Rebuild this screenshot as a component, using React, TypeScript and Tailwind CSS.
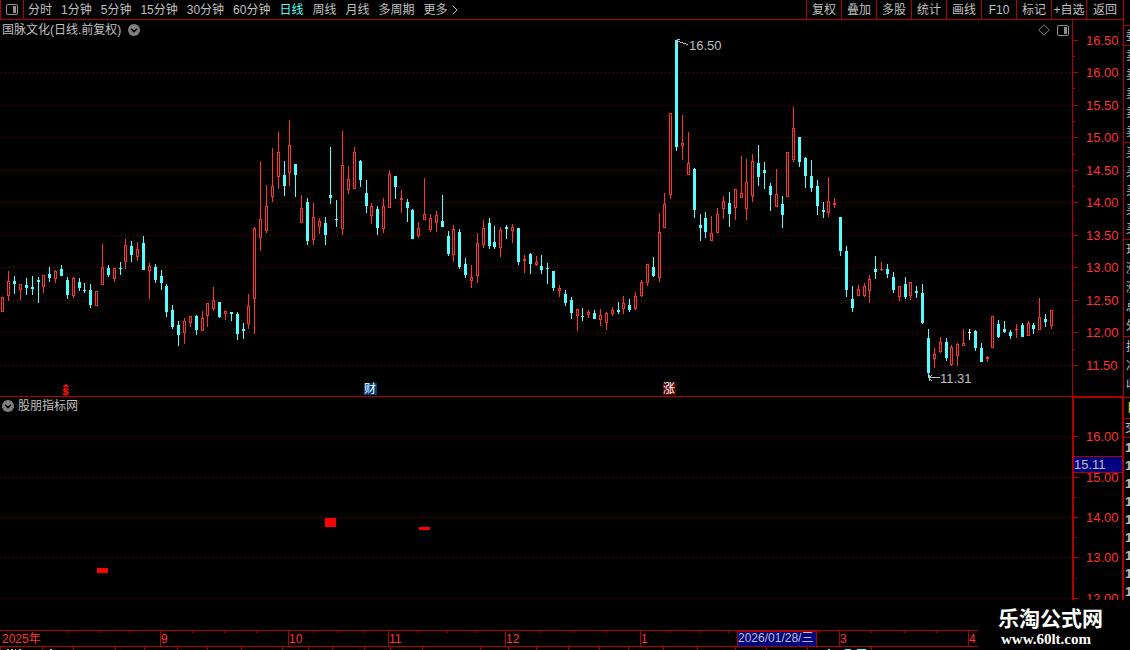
import React, { useState } from "react";

/**
 * Stock K-line terminal view
 * - period tabs and tool buttons on top
 * - candlestick chart with price scale
 * - indicator panel and time scale below
 */

type Kind = "r" | "c" | "w";
type Candle = [Kind, number, number, number, number];

const PERIODS = ["分时", "1分钟", "5分钟", "15分钟", "30分钟", "60分钟", "日线", "周线", "月线", "多周期"];
const TOOLS = ["复权", "叠加", "多股", "统计", "画线", "F10", "标记", "+自选"];

const COLORS = { r: "#ff3232", c: "#54ffff", w: "#ffffff" };
const AXIS = "#b00000";
const GRID = "#980000";

const FIRST_X = 2.87;
const STEP_X = 5.8586;

// colour, high, body top, body bottom, low
const CANDLES: Candle[] = [
  ["r", 297, 297, 312, 312], ["r", 271, 281, 296, 301], ["c", 276, 281, 284, 294], ["r", 284, 284, 290, 300],
  ["c", 278, 285, 288, 295], ["c", 276, 287, 289, 295], ["c", 277, 280, 282, 303], ["r", 275, 275, 287, 293],
  ["c", 267, 274, 278, 282], ["r", 270, 271, 279, 283], ["c", 265, 269, 276, 276], ["c", 277, 280, 295, 299],
  ["r", 277, 278, 296, 298], ["c", 278, 282, 288, 291], ["c", 283, 290, 291, 293], ["c", 284, 290, 305, 308],
  ["r", 291, 291, 306, 306], ["r", 244, 267, 285, 285], ["c", 265, 268, 275, 277], ["r", 268, 268, 279, 282],
  ["c", 262, 268, 269, 275], ["r", 239, 245, 262, 269], ["c", 241, 246, 255, 262], ["r", 242, 249, 257, 261],
  ["c", 236, 243, 270, 270], ["r", 263, 266, 271, 299], ["c", 264, 267, 280, 283], ["c", 270, 276, 283, 290],
  ["c", 284, 286, 312, 317], ["c", 305, 310, 327, 329], ["c", 321, 325, 335, 346], ["r", 318, 321, 333, 344],
  ["r", 316, 316, 323, 327], ["c", 315, 316, 330, 335], ["r", 311, 318, 331, 331], ["r", 303, 303, 316, 327],
  ["r", 287, 300, 309, 311], ["c", 302, 302, 317, 318], ["r", 310, 311, 314, 320], ["c", 312, 312, 314, 321],
  ["c", 312, 314, 334, 340], ["c", 323, 329, 331, 339], ["r", 294, 306, 324, 329], ["r", 227, 228, 299, 334],
  ["r", 161, 219, 238, 251], ["r", 185, 206, 231, 233], ["r", 148, 186, 197, 202], ["r", 132, 152, 177, 189],
  ["c", 161, 175, 186, 196], ["r", 120, 145, 173, 186], ["c", 164, 164, 175, 197], ["r", 195, 208, 223, 223],
  ["c", 198, 202, 241, 245], ["r", 203, 217, 240, 245], ["r", 218, 221, 227, 234], ["c", 217, 223, 235, 245],
  ["c", 147, 195, 198, 204], ["c", 200, 219, 220, 227], ["r", 131, 165, 229, 235], ["r", 166, 179, 190, 194],
  ["r", 147, 152, 189, 189], ["c", 160, 161, 180, 187], ["c", 180, 193, 206, 213], ["r", 203, 206, 216, 224],
  ["c", 206, 209, 228, 235], ["r", 198, 206, 229, 233], ["r", 170, 174, 208, 208], ["c", 176, 176, 187, 199],
  ["r", 190, 198, 200, 213], ["c", 199, 202, 208, 222], ["c", 209, 210, 239, 239], ["r", 222, 228, 236, 238],
  ["r", 178, 214, 220, 220], ["r", 214, 218, 230, 232], ["r", 211, 215, 223, 232], ["c", 195, 221, 227, 227],
  ["c", 231, 236, 254, 256], ["r", 225, 229, 255, 262], ["c", 229, 232, 267, 269], ["c", 258, 264, 275, 278],
  ["r", 265, 277, 281, 288], ["r", 233, 243, 276, 283], ["r", 220, 228, 245, 248], ["c", 218, 223, 246, 249],
  ["c", 226, 242, 247, 249], ["r", 227, 230, 248, 257], ["c", 225, 227, 229, 239], ["r", 224, 227, 231, 243],
  ["c", 228, 228, 262, 265], ["r", 255, 259, 261, 273], ["c", 253, 254, 264, 274], ["r", 256, 262, 265, 266],
  ["c", 255, 266, 270, 274], ["c", 263, 268, 269, 284], ["c", 271, 271, 288, 291], ["r", 285, 288, 291, 297],
  ["c", 290, 294, 303, 306], ["c", 297, 300, 313, 319], ["r", 309, 309, 316, 331], ["c", 308, 316, 317, 321],
  ["r", 310, 312, 315, 318], ["c", 310, 313, 319, 319], ["r", 309, 315, 320, 326], ["r", 312, 313, 323, 330],
  ["r", 307, 310, 314, 316], ["c", 302, 310, 312, 314], ["r", 296, 303, 309, 314], ["c", 299, 305, 310, 312],
  ["r", 292, 296, 309, 310], ["r", 280, 282, 296, 297], ["r", 264, 264, 283, 286], ["c", 257, 267, 276, 277],
  ["r", 213, 232, 278, 282], ["r", 193, 204, 228, 228], ["r", 113, 113, 195, 199], ["c", 40, 40, 147, 151],
  ["r", 115, 143, 146, 160], ["r", 132, 163, 175, 175], ["c", 168, 169, 210, 218], ["c", 214, 225, 228, 241],
  ["c", 212, 218, 232, 238], ["r", 216, 233, 241, 241], ["r", 208, 214, 233, 233], ["r", 196, 201, 209, 219],
  ["c", 192, 203, 214, 227], ["r", 189, 189, 208, 220], ["r", 156, 193, 198, 198], ["r", 159, 182, 209, 220],
  ["r", 154, 161, 196, 202], ["c", 145, 163, 177, 186], ["c", 162, 170, 173, 189], ["c", 183, 186, 195, 211],
  ["r", 169, 194, 207, 207], ["c", 196, 204, 215, 228], ["r", 152, 152, 197, 197], ["r", 107, 128, 160, 162],
  ["c", 137, 137, 162, 167], ["c", 157, 158, 176, 188], ["c", 160, 176, 188, 192], ["c", 180, 186, 206, 215],
  ["c", 202, 210, 212, 218], ["r", 177, 201, 213, 217], ["r", 198, 203, 205, 208], ["c", 217, 217, 251, 256],
  ["c", 246, 251, 290, 297], ["c", 286, 299, 308, 312], ["r", 285, 289, 296, 296], ["r", 283, 286, 296, 297],
  ["r", 275, 279, 291, 303], ["c", 256, 269, 272, 279], ["r", 262, 269, 270, 271], ["c", 264, 269, 274, 278],
  ["c", 272, 277, 290, 293], ["r", 286, 286, 297, 301], ["c", 277, 284, 297, 299], ["r", 282, 282, 296, 300],
  ["c", 286, 291, 293, 298], ["c", 284, 293, 323, 324], ["c", 329, 338, 373, 378], ["r", 348, 354, 359, 368],
  ["r", 337, 342, 352, 353], ["c", 338, 342, 358, 361], ["r", 345, 347, 365, 366], ["r", 343, 344, 356, 366],
  ["r", 329, 343, 346, 346], ["w", 329, 332, 333, 340], ["c", 330, 331, 348, 351], ["c", 343, 348, 362, 362],
  ["r", 356, 357, 359, 362], ["r", 316, 316, 348, 348], ["c", 320, 324, 337, 338], ["c", 321, 329, 332, 333],
  ["c", 330, 332, 336, 339], ["r", 324, 329, 330, 338], ["c", 323, 325, 337, 337], ["r", 321, 323, 336, 336],
  ["c", 323, 325, 329, 334], ["r", 298, 317, 330, 330], ["c", 314, 319, 322, 327], ["r", 310, 310, 326, 329],
];

const PRICES: [string, number][] = [
  ["16.50", 40], ["16.00", 72], ["15.50", 105], ["15.00", 137], ["14.50", 170], ["14.00", 202],
  ["13.50", 235], ["13.00", 267], ["12.50", 300], ["12.00", 332], ["11.50", 365],
];
const PRICE_MINOR = [56, 88, 121, 154, 186, 219, 251, 284, 316, 349];

const LEVELS: [string, number][] = [
  ["16.00", 436], ["15.00", 477], ["14.00", 517], ["13.00", 557], ["12.00", 598],
];
const LEVEL_MINOR = [497, 537, 578];

const MONTHS: [string, number][] = [
  ["9", 161], ["10", 289], ["11", 389], ["12", 506], ["1", 641], ["3", 840], ["4", 969],
];
const WEEK_TICKS = [68, 99, 129, 192, 224, 256, 313, 338, 363, 417, 447, 476, 539, 573, 606, 669, 699, 728, 819, 871, 904, 936];
const NEXT_TICKS = [0, 42, 73, 115, 144, 177, 207, 241, 282, 308, 332, 364, 390, 422, 480, 508, 536, 568, 599, 628, 663, 697, 735, 766, 807, 871];

const QUOTE_GROUPS = [
  ["卖", "卖", "卖", "卖", "卖"],
  ["买", "买", "买", "买", "买"],
  ["现", "涨", "涨", "总", "外"],
];
const TRADE_TIMES = ["1", "1", "1", "1", "1", "1", "1", "1", "1"];

export default function App() {
  const [period, setPeriod] = useState("日线");

  return (
    <div className="flex h-screen w-full overflow-hidden bg-black text-[12px] leading-none text-[#c0c0c0] [font-family:'Liberation_Sans','Noto_Sans_CJK_SC',sans-serif]">
      <div className="flex min-w-0 flex-1 flex-col">
        <Toolbar period={period} setPeriod={setPeriod} />

        <div className="flex h-[377px] shrink-0 border-b border-[#b00000]">
          <section className="flex min-w-0 flex-1 flex-col overflow-hidden">
            <div className="flex h-[20px] items-center justify-between pr-[3px] pl-[2px]">
              <div className="flex items-center gap-[7px]">
                <h1>国脉文化(日线.前复权)</h1>
                <RoundChevron label="主图设置" />
              </div>
              <div className="flex items-center gap-[7px]">
                <button aria-label="标记点">
                  <svg width="12" height="12" viewBox="0 0 12 12" fill="none" stroke="#808080">
                    <path d="M6 .8 11.2 6 6 11.2.8 6Z" />
                  </svg>
                </button>
                <button aria-label="侧栏">
                  <PanelIcon />
                </button>
              </div>
            </div>
            <CandleChart />
          </section>
          <div className="shrink-0 border-l border-[#b00000]">
            <Scale rows={PRICES} minor={PRICE_MINOR} top={20} width={50} height={376} textX={13} />
          </div>
        </div>

        <div className="flex min-h-0 flex-1">
          <section className="flex min-w-0 flex-1 flex-col overflow-hidden">
            <div className="flex h-[17px] shrink-0 items-center gap-[4px] pl-[2px]">
              <RoundChevron label="副图设置" />
              <h2>股朋指标网</h2>
            </div>
            <IndicatorChart />
          </section>
          <div className="relative shrink-0 overflow-hidden border-t border-r border-l-2 border-[#b00000]">
            <Scale rows={LEVELS} minor={LEVEL_MINOR} top={398} width={48} height={232} textX={12} />
            <div className="absolute top-[58px] right-0 left-0 flex h-[17px] items-center border-y border-[#b00000] bg-[#000080] text-[13px]">
              15.11
            </div>
          </div>
        </div>

        <TimeScale />
      </div>

      <QuoteStrip />

      <div className="absolute right-0 bottom-0 flex h-[50px] w-[152px] flex-col bg-black pt-[8px] pl-[20px] text-white">
        <div className="text-[21px] leading-[22px] font-bold">乐淘公式网</div>
        <div className="pl-[3px] text-[15px] leading-[18px] font-bold [font-family:'Liberation_Serif',serif]">
          www.60lt.com
        </div>
      </div>
    </div>
  );
}

function Toolbar({ period, setPeriod }: { period: string; setPeriod: (p: string) => void }) {
  return (
    <nav className="flex h-[20px] shrink-0 justify-between border-b border-[#b00000] whitespace-nowrap">
      <div className="flex items-center">
        <button aria-label="布局" className="flex h-full w-[24px] items-center justify-center border-x border-[#b00000]">
          <PanelIcon />
        </button>
        <div className="flex items-center gap-[9px] pl-[4px]">
          {PERIODS.map((p) => (
            <button key={p} onClick={() => setPeriod(p)} className={p === period ? "text-[#54ffff]" : ""}>
              {p}
            </button>
          ))}
          <button className="flex items-center gap-[4px]">
            更多
            <svg width="6" height="10" viewBox="0 0 6 10" fill="none" stroke="#c0c0c0">
              <path d="M.7.7 5 5 .7 9.3" />
            </svg>
          </button>
        </div>
      </div>
      <div className="flex">
        {TOOLS.map((t) => (
          <button key={t} className="w-[35px] border-l border-[#b00000] text-center">
            {t}
          </button>
        ))}
        <button className="w-[37px] border-l border-[#b00000] text-center">返回</button>
      </div>
    </nav>
  );
}

function PanelIcon() {
  return (
    <svg width="12" height="11" viewBox="0 0 12 11" fill="none">
      <rect x=".5" y=".5" width="11" height="10" rx="1.5" stroke="#909090" />
      <rect x="7" y="2" width="3" height="7" fill="#909090" />
    </svg>
  );
}

function RoundChevron({ label }: { label: string }) {
  return (
    <button aria-label={label}>
      <svg width="12" height="12" viewBox="0 0 12 12">
        <circle cx="6" cy="6" r="6" fill="#808080" />
        <path d="M3 4.8 6 7.6l3-2.8" fill="none" stroke="#000" strokeWidth="1.5" />
      </svg>
    </button>
  );
}

function GridLines({ rows }: { rows: [string, number][] }) {
  return (
    <>
      {rows.map(([label, y]) => (
        <line key={label} x1="1" x2="1072" y1={y + 0.5} y2={y + 0.5} stroke={GRID} strokeDasharray="1 3" />
      ))}
    </>
  );
}

function CandleChart() {
  return (
    <svg width="1072" height="356" viewBox="0 40 1072 356" shapeRendering="crispEdges" className="shrink-0 overflow-visible">
      <GridLines rows={PRICES.slice(1)} />
      {CANDLES.map(([kind, high, top, bottom, low], i) => {
        const x = Math.floor(FIRST_X + i * STEP_X);
        return (
          <g key={i} fill={COLORS[kind]}>
            <rect x={x} y={high} width="1" height={low - high} />
            <rect x={x - 1} y={top} width="3" height={bottom - top} />
            {kind === "r" && bottom - top > 2 && (
              <rect x={x} y={top + 1} width="1" height={bottom - top - 2} fill="#000" />
            )}
          </g>
        );
      })}

      {/* high and low of the visible range */}
      <g fill="none" stroke="#c0c0c0">
        <path d="M677 39.5h3M676.5 40v5M677 41.5h3M680 42.5h3M683 43.5h3M686 44.5h2" />
        <path d="M929 377.5h11M929.5 375v6M931 375.5h1M930 376.5h1M930 379.5h1M931 380.5h1" />
      </g>
      <g fill="#c0c0c0" className="text-[13px]">
        <text x="689" y="50">16.50</text>
        <text x="940" y="383">11.31</text>
      </g>

      {/* event marks on the bottom edge */}
      <g fill="none" stroke="#ff0000">
        <path d="M65 384.5h2M64 385.5h4M63 386.5h6" />
        <path d="M64 388.5h4M63 389.5h2M67 389.5h2M63 390.5h2M64 391.5h4M66 392.5h3M63 393.5h2M67 393.5h2M63 394.5h5M65.5 388v8" />
      </g>
      <rect x="364" y="383" width="13" height="12" fill="#004080" />
      <text x="364" y="393" fill="#fff">财</text>
      <rect x="663" y="383" width="13" height="12" fill="#600000" />
      <text x="663" y="393" fill="#fff">涨</text>
    </svg>
  );
}

function IndicatorChart() {
  return (
    <svg width="1072" height="216" viewBox="0 414 1072 216" shapeRendering="crispEdges" className="shrink-0">
      <GridLines rows={LEVELS} />
      <g fill="#ff0000">
        <rect x="97" y="568" width="11" height="5" />
        <rect x="325" y="518" width="11" height="9" />
        <rect x="419" y="527" width="11" height="3" />
      </g>
    </svg>
  );
}

type ScaleProps = {
  rows: [string, number][];
  minor: number[];
  top: number;
  width: number;
  height: number;
  textX: number;
};

function Scale({ rows, minor, top, width, height, textX }: ScaleProps) {
  return (
    <svg width={width} height={height} viewBox={`0 ${top} ${width} ${height}`} shapeRendering="crispEdges" className="block">
      {rows.map(([label, y]) => (
        <g key={label}>
          <rect x="0" y={y} width="5" height="1" fill={AXIS} />
          <text x={textX} y={y + 5} fill="#ff3232" className="text-[13px]">{label}</text>
        </g>
      ))}
      {minor.map((y) => (
        <rect key={y} x="0" y={y} width="2" height="1" fill={AXIS} />
      ))}
    </svg>
  );
}

function TimeScale() {
  return (
    <div className="h-[20px] shrink-0 overflow-hidden">
      <svg width="1123" height="20" viewBox="0 630 1123 20" shapeRendering="crispEdges">
        <rect x="0" y="630" width="1123" height="1" fill={AXIS} />
        <rect x="0" y="646" width="1123" height="1" fill={AXIS} />
        <text x="2" y="643" fill="#ff3232">2025年</text>
        {MONTHS.map(([m, x]) => (
          <g key={m}>
            <rect x={x - 1} y="631" width="1" height="15" fill={AXIS} />
            <text x={x} y="643" fill="#ff3232">{m}</text>
          </g>
        ))}
        {WEEK_TICKS.map((x) => (
          <rect key={x} x={x} y="631" width="1" height="2" fill={AXIS} />
        ))}
        {NEXT_TICKS.map((x) => (
          <rect key={x} x={x} y="647" width="1" height="3" fill={AXIS} />
        ))}
        <rect x="737" y="631" width="79" height="15" fill="#000080" stroke={AXIS} />
        <text x="738" y="642" fill="#c0c0c0">2026/01/28/三</text>
        <path d="M7 649.5h2M11 649.5h2M15 649.5h1M19 649.5h2M50 649.5h2" stroke="#c0c0c0" />
        <path d="M828 649.5h2M845 649.5h6M857 649.5h9" stroke="#54ffff" />
      </svg>
    </div>
  );
}

// left edge of the quote panel, the rest of it runs out of the window
function QuoteStrip() {
  return (
    <aside className="flex w-[7px] shrink-0 flex-col overflow-hidden border-l border-[#b00000] pt-[25px] whitespace-nowrap">
      <div className="flex h-[20px] shrink-0 items-center border-t border-[#b00000] pl-[2px]">委</div>
      {QUOTE_GROUPS.map((group, i) => (
        <div key={i} className="flex h-[97px] shrink-0 flex-col border-t border-[#b00000] pl-[2px]">
          {group.map((q, j) => (
            <div key={j} className="flex h-[19px] shrink-0 items-center">{q}</div>
          ))}
        </div>
      ))}
      <div className="flex h-[61px] shrink-0 flex-col border-t border-[#b00000] pl-[2px]">
        <div className="flex h-[19px] items-center">换</div>
        <div className="flex h-[19px] items-center">净</div>
        <div className="flex h-[19px] items-center">收</div>
      </div>
      <div className="flex h-[21px] shrink-0 items-center border-t border-[#b00000] pl-[3px] text-[#ffff00]">目</div>
      <div className="flex h-[19px] shrink-0 items-center border-t border-[#b00000] pl-[1px]">交</div>
      <div className="flex shrink-0 flex-col border-t border-[#b00000] pl-[1px] text-[13px] font-bold">
        {TRADE_TIMES.map((t, i) => (
          <div key={i} className="flex h-[18px] items-center">{t}</div>
        ))}
      </div>
    </aside>
  );
}
